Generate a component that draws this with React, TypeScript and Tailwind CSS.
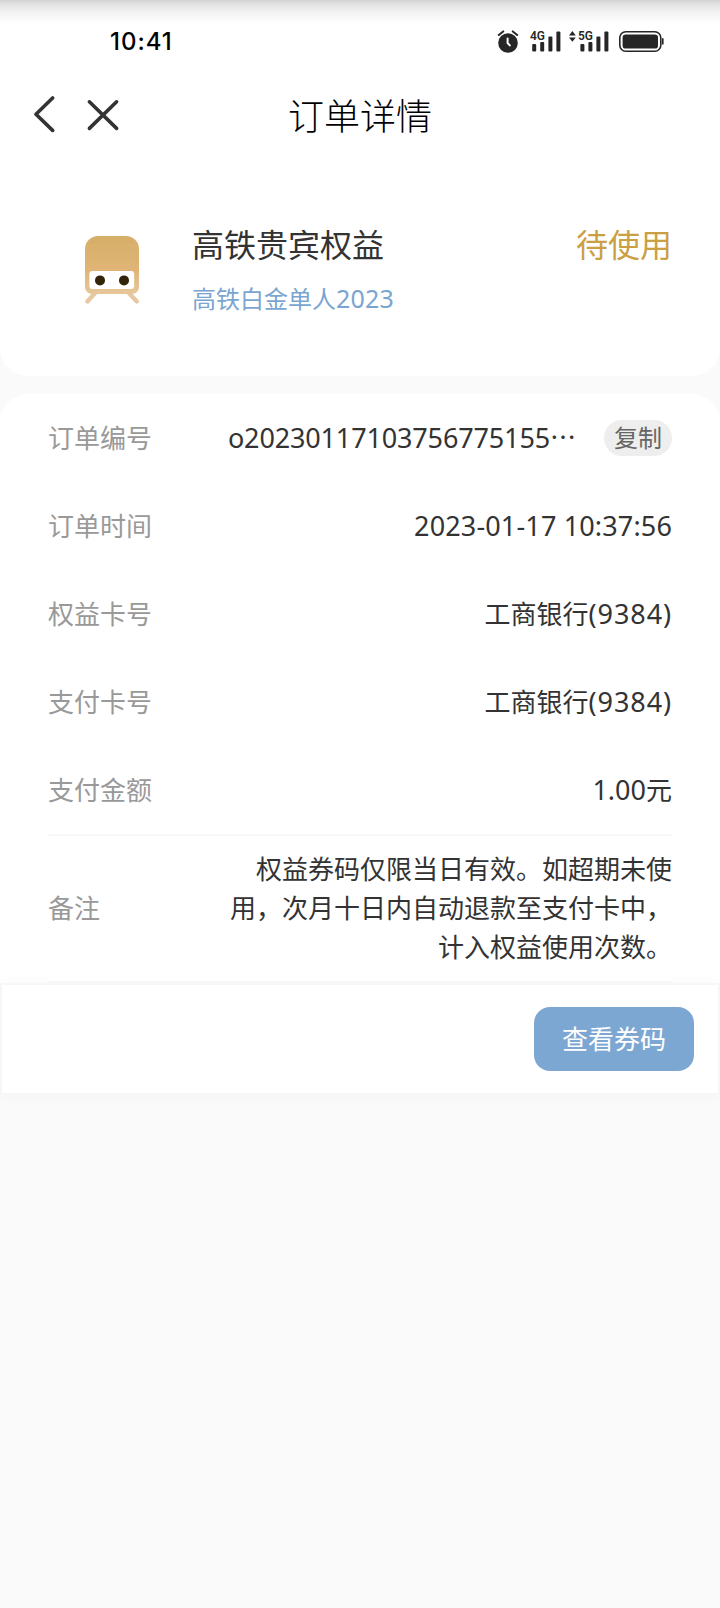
import type { ReactNode } from "react";

type row = {
  label: string;
  bank?: string;
  value: string;
  unit?: string;
  spacing: string;
};

function StatusBar() {
  return (
    <div className="flex h-[82px] items-start justify-between bg-[linear-gradient(to_bottom,#d3d3d3_0px,#e4e4e4_5px,#f4f4f4_13px,#ffffff_24px)] pt-[27px] pr-[56px] pl-[110px]">
      <p className="font-['Inter',sans-serif] text-[24px] leading-[30px] font-medium tracking-[1px] text-black">
        10:41
      </p>
      <svg width="168" height="26" viewBox="0 0 168 26" fill="#262626">
        {/* alarm clock */}
        <circle cx="12" cy="16" r="9.8" />
        <path
          d="M2.8 8 7.2 4.4M21.2 8 16.8 4.4"
          stroke="#262626"
          strokeWidth="2"
          strokeLinecap="round"
        />
        <path
          d="M11.6 11.5V16l2.2 2.4"
          stroke="#fff"
          strokeWidth="2"
          fill="none"
          strokeLinecap="round"
        />
        {/* 4G signal */}
        <text
          x="34"
          y="12.6"
          fontSize="13.5"
          fontWeight="600"
          fontFamily="Roboto, sans-serif"
          textLength="15"
          lengthAdjust="spacingAndGlyphs"
        >
          4G
        </text>
        <rect x="36.2" y="17" width="4" height="7.6" rx="1" />
        <rect x="44.2" y="15" width="4" height="9.6" rx="1" />
        <rect x="52.4" y="9.6" width="4" height="15" rx="1" />
        <rect x="60.4" y="4.6" width="4" height="20" rx="1" />
        {/* 5G signal */}
        <path d="M73 8.4 76.4 4l3.4 4.4zM73 10.4h6.8l-3.4 4.4z" />
        <text
          x="82"
          y="12.6"
          fontSize="13.5"
          fontWeight="600"
          fontFamily="Roboto, sans-serif"
          textLength="15"
          lengthAdjust="spacingAndGlyphs"
        >
          5G
        </text>
        <rect x="84.4" y="17" width="4" height="7.6" rx="1" />
        <rect x="92.4" y="15" width="4" height="9.6" rx="1" />
        <rect x="100.4" y="9.6" width="4" height="15" rx="1" />
        <rect x="108.4" y="4.6" width="4" height="20" rx="1" />
        {/* battery */}
        <rect
          x="123.8"
          y="4.8"
          width="41"
          height="19.4"
          rx="6"
          fill="none"
          stroke="#262626"
          strokeWidth="1.6"
        />
        <rect x="126.6" y="7.4" width="35.4" height="14.2" rx="3.2" />
        <path d="M166 11.2h1.6v6.4H166z" />
      </svg>
    </div>
  );
}

function NavBar() {
  return (
    <div className="grid h-[68px] grid-cols-[1fr_auto_1fr] items-center pl-[33px]">
      <svg
        width="88"
        height="40"
        viewBox="0 0 88 40"
        fill="none"
        stroke="#333"
        strokeWidth="3.6"
        strokeLinecap="round"
        strokeLinejoin="round"
      >
        <path d="M19.6 2 3 18.2 19.6 34.4" />
        <path d="M56.4 5.8 83.6 32.4M83.6 5.8 56.4 32.4" />
      </svg>
      <h1 className="-ml-[33px] pt-[2px] text-[36px] leading-[52px] font-light text-black">
        订单详情
      </h1>
    </div>
  );
}

function TrainIcon() {
  return (
    <svg width="58" height="70" viewBox="0 0 58 70">
      <defs>
        <linearGradient id="train" x1="0" y1="0" x2="0" y2="1">
          <stop offset="0" stopColor="#d7ae68" />
          <stop offset="0.6" stopColor="#e0b577" />
          <stop offset="1" stopColor="#e7c79b" />
        </linearGradient>
      </defs>
      <path
        d="M12 57 3.4 66.4M44 57l8.8 9.4"
        stroke="#e6c9a3"
        strokeWidth="4.4"
        strokeLinecap="round"
      />
      <path
        d="M14 1h28a13 13 0 0 1 13 13v38a7 7 0 0 1-7 7H8a7 7 0 0 1-7-7V14A13 13 0 0 1 14 1z"
        fill="url(#train)"
      />
      <rect x="5.4" y="36" width="44.8" height="18" rx="3" fill="#fff" />
      <circle cx="16" cy="45.4" r="5" fill="#33240a" />
      <circle cx="40" cy="45.4" r="5" fill="#33240a" />
    </svg>
  );
}

function Row({ label, children }: { label: string; children: ReactNode }) {
  return (
    <div className="flex h-[88px] items-center justify-between">
      <p className="text-[26px] leading-[39px] text-[#999]">{label}</p>
      {children}
    </div>
  );
}

function App() {
  const rows: row[] = [
    {
      label: "订单时间",
      value: "2023-01-17 10:37:56",
      spacing: "tracking-[0.15px]",
    },
    {
      label: "权益卡号",
      bank: "工商银行",
      value: "(9384)",
      spacing: "tracking-[0.9px]",
    },
    {
      label: "支付卡号",
      bank: "工商银行",
      value: "(9384)",
      spacing: "tracking-[0.9px]",
    },
    {
      label: "支付金额",
      value: "1.00",
      unit: "元",
      spacing: "tracking-[0px]",
    },
  ];

  return (
    <div className="h-[1608px] w-[720px] overflow-hidden bg-[#fafafa] font-['Noto_Sans','Noto_Sans_CJK_SC',sans-serif] text-[#333]">
      <div className="h-[376px] rounded-b-[28px] bg-white">
        <StatusBar />
        <NavBar />
        <div className="flex items-start pt-[75px] pr-[48px] pl-[84px]">
          <div className="pt-[10px]">
            <TrainIcon />
          </div>
          <div className="ml-[50px] flex-1">
            <h2 className="text-[32px] leading-[40px]">高铁贵宾权益</h2>
            <p className="mt-[15px] text-[24px] leading-[36px] text-[#7ba5d1]">
              高铁白金单人
              <span className="text-[25px] tracking-[0.2px]">2023</span>
            </p>
          </div>
          <p className="text-[32px] leading-[40px] text-[#cba043]">待使用</p>
        </div>
      </div>

      <div className="mt-[18px] h-[589px] rounded-t-[28px] bg-white px-[48px]">
        <Row label="订单编号">
          <div className="flex items-center">
            <p className="flex pb-[1px] text-[27px] leading-[39px] tracking-[-0.15px] whitespace-nowrap">
              o20230117103756775155
              <span className="-translate-y-[2px] font-['Noto_Sans_CJK_SC',sans-serif] text-[26px] tracking-normal">
                …
              </span>
            </p>
            <button className="ml-[28px] h-9 w-[68px] rounded-full bg-[#eee] pb-[1px] text-[24px] leading-[35px] text-[#666]">
              复制
            </button>
          </div>
        </Row>
        {rows.map((row) => {
          return (
            <Row key={row.label} label={row.label}>
              <p className="pb-[1px] text-[26px] leading-[39px]">
                {row.bank}
                <span className={`text-[27px] ${row.spacing}`}>
                  {row.value}
                </span>
                {row.unit}
              </p>
            </Row>
          );
        })}
        <div className="relative flex h-[149px] items-center justify-between border-y-2 border-[#f7f7f7] bg-white">
          <p className="text-[26px] text-[#999]">备注</p>
          <p className="w-[444px] text-right text-[26px] leading-[39px]">
            权益券码仅限当日有效。如超期未使用，次月十日内自动退款至支付卡中，计入权益使用次数。
          </p>
        </div>
      </div>

      <div className="flex h-[112px] items-center justify-end border-2 border-[#f7f7f7] bg-white pr-[24px] shadow-[0_0_14px_rgba(0,0,0,0.03)]">
        <button className="h-16 w-[160px] rounded-2xl bg-[#7da7d3] text-[26px] text-white">
          查看券码
        </button>
      </div>
    </div>
  );
}

export default App;
